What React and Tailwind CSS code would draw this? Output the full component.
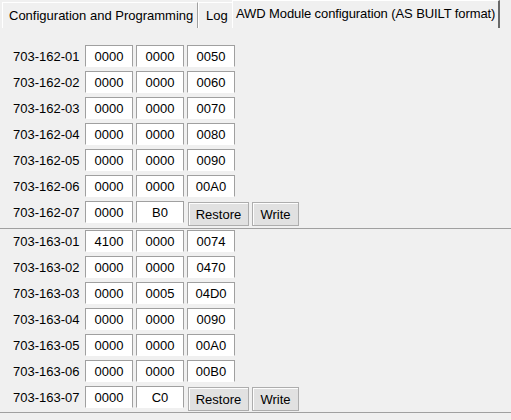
import React from "react";

const groups = [
  {
    prefix: "703-162",
    rows: [
      ["0000", "0000", "0050"],
      ["0000", "0000", "0060"],
      ["0000", "0000", "0070"],
      ["0000", "0000", "0080"],
      ["0000", "0000", "0090"],
      ["0000", "0000", "00A0"],
    ],
    last: ["0000", "B0"],
  },
  {
    prefix: "703-163",
    rows: [
      ["4100", "0000", "0074"],
      ["0000", "0000", "0470"],
      ["0000", "0005", "04D0"],
      ["0000", "0000", "0090"],
      ["0000", "0000", "00A0"],
      ["0000", "0000", "00B0"],
    ],
    last: ["0000", "C0"],
  },
];

function Field({ value }) {
  return (
    <div className="w-[48px] h-[22px] bg-white border border-[#a0a0a0] border-b-white flex items-center justify-center leading-none">
      {value}
    </div>
  );
}

function Button({ children, className = "" }) {
  return (
    <button
      className={`h-[24px] bg-[#e1e1e1] border border-[#adadad] shadow-[inset_1px_1px_0_#fdfdfd] flex items-center justify-center leading-none ${className}`}
    >
      {children}
    </button>
  );
}

function Label({ children }) {
  return <div className="w-[72px] leading-none">{children}</div>;
}

function Group({ prefix, rows, last, className = "" }) {
  return (
    <div className={`flex flex-col gap-[4px] pl-[13px] border-b border-[#a0a0a0] ${className}`}>
      {rows.map((r, i) => (
        <div key={i} className="flex items-center h-[22px]">
          <Label>{`${prefix}-0${i + 1}`}</Label>
          <div className="flex gap-[3px]">
            {r.map((v, j) => (
              <Field key={j} value={v} />
            ))}
          </div>
        </div>
      ))}
      <div className="flex items-start h-[25px]">
        <div className="h-[22px] flex items-center">
          <Label>{`${prefix}-07`}</Label>
        </div>
        <div className="flex gap-[3px]">
          {last.map((v, j) => (
            <Field key={j} value={v} />
          ))}
        </div>
        <div className="flex gap-[3px] ml-[4px] mt-px">
          <Button className="w-[61px]">Restore</Button>
          <Button className="w-[47px]">Write</Button>
        </div>
      </div>
    </div>
  );
}

export default function App() {
  return (
    <div
      className="w-[511px] h-[420px] bg-[#f0f0f0] overflow-hidden text-[13px] text-black"
      style={{ fontFamily: '"Liberation Sans", Arial, sans-serif' }}
    >
      {/* tab strip */}
      <div className="h-[28px] flex items-end pl-[2px] whitespace-nowrap">
        <div className="h-[26px] w-[196px] border-l border-t border-white border-r border-r-[#a0a0a0] pl-[6px] pt-[6px] leading-none">
          Configuration and Programming
        </div>
        <div className="h-[26px] w-[34px] border-l border-t border-white pl-[7px] pt-[6px] leading-none">
          Log
        </div>
        <div className="h-[28px] w-[268px] border-l border-t border-white border-r-2 border-r-[#696969] pl-[3px] pt-[6px] leading-none tracking-[-0.1px] overflow-hidden">
          AWD Module configuration (AS BUILT format)
        </div>
      </div>

      <div className="pt-[17px]">
        <Group {...groups[0]} className="pb-[2px]" />
        <Group {...groups[1]} className="pt-[1px] pb-[1px]" />
      </div>
    </div>
  );
}
